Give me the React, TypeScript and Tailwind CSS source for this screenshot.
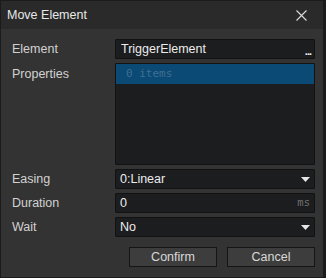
import React from "react";

const Arrow = () => (
  <svg width="9" height="5" viewBox="0 0 9 5" className="shrink-0">
    <path d="M0 0 H9 L4.5 5 Z" fill="#e6e6e6" />
  </svg>
);

const Row = ({ label, children }: { label: string; children: React.ReactNode }) => (
  <div className="flex items-center h-[20px]">
    <div className="w-[114px] shrink-0 pl-[11px] text-[12.5px] text-[#d2d2d2]">{label}</div>
    <div className="flex-1 h-full">{children}</div>
  </div>
);

export default function App() {
  return (
    <div
      className="w-[326px] h-[278px] bg-[#1b1b1b] flex flex-col pl-px pt-px pr-[3px] pb-px"
      style={{ fontFamily: '"Liberation Sans", Arial, sans-serif' }}
    >
      <div className="h-[28px] bg-[#2a2a2a] flex items-center justify-between pl-[6px] pr-[16px]">
        <span className="text-[12.5px] text-[#e8e8e8]">Move Element</span>
        <svg width="11" height="11" viewBox="0 0 11 11">
          <path d="M0.5 0.5 L10.5 10.5 M10.5 0.5 L0.5 10.5" stroke="#dcdcdc" strokeWidth="1.1" />
        </svg>
      </div>
      <div className="flex-1 bg-[#333333] flex flex-col pt-[10px] pr-[8px] gap-[4px]">
        <Row label="Element">
          <div className="h-full bg-[#1c1d1f] border border-[#121212] rounded-[1px] flex items-center justify-between pl-[5px] pr-[3px]">
            <span className="text-[12.5px] text-[#ececec]">TriggerElement</span>
            <span className="text-[11px] font-bold text-[#f0f0f0] leading-none pt-[5px] tracking-[-1px]">...</span>
          </div>
        </Row>
        <div className="flex h-[102px]">
          <div className="w-[114px] shrink-0 pl-[11px] pt-[2px] text-[12.5px] text-[#d2d2d2]">Properties</div>
          <div className="flex-1 bg-[#1c1d1f] border border-[#121212] rounded-[1px]">
            <div
              className="h-[20px] bg-[#0b4a74] flex items-center pl-[10px] text-[11px] text-[#3e6f92]"
              style={{ fontFamily: '"DejaVu Sans Mono", monospace' }}
            >
              0 items
            </div>
          </div>
        </div>
        <Row label="Easing">
          <div className="h-full bg-[#1c1d1f] border border-[#121212] rounded-[1px] flex items-center justify-between pl-[4px] pr-[4px]">
            <span className="text-[12.5px] text-[#ececec]">0:Linear</span>
            <Arrow />
          </div>
        </Row>
        <Row label="Duration">
          <div className="h-full bg-[#1c1d1f] border border-[#121212] rounded-[1px] flex items-center justify-between pl-[4px] pr-[4px]">
            <span className="text-[12.5px] text-[#ececec]">0</span>
            <span className="text-[10.5px] text-[#6f6f6f]" style={{ fontFamily: '"DejaVu Sans Mono", monospace' }}>
              ms
            </span>
          </div>
        </Row>
        <Row label="Wait">
          <div className="h-full bg-[#1c1d1f] border border-[#121212] rounded-[1px] flex items-center justify-between pl-[4px] pr-[4px]">
            <span className="text-[12.5px] text-[#ececec]">No</span>
            <Arrow />
          </div>
        </Row>
        <div className="flex justify-end gap-[10px] mt-[6px]">
          <button className="w-[88px] h-[20px] bg-[#3d3d3d] border border-[#151515] text-[12.5px] text-[#d8d8d8] flex items-center justify-center">
            Confirm
          </button>
          <button className="w-[88px] h-[20px] bg-[#3d3d3d] border border-[#151515] text-[12.5px] text-[#d8d8d8] flex items-center justify-center">
            Cancel
          </button>
        </div>
      </div>
    </div>
  );
}
